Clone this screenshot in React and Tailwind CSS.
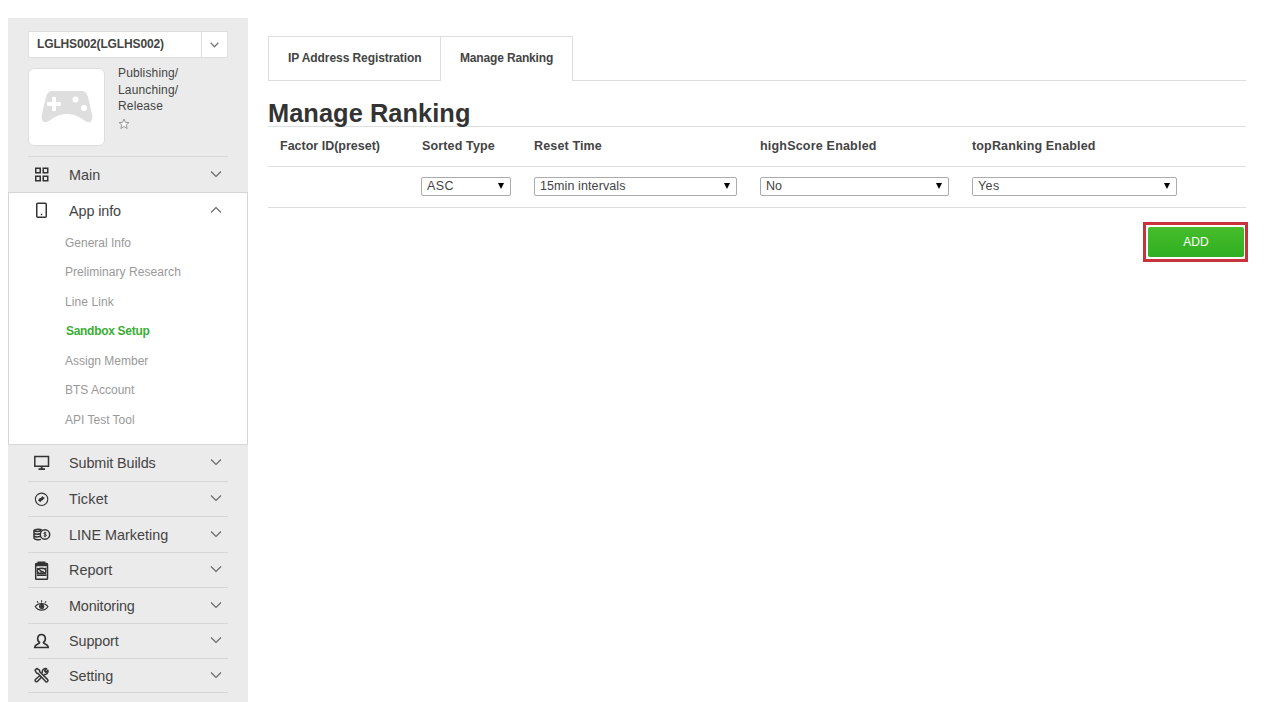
import React from "react";

const stroke = { fill: "none", stroke: "#333", strokeWidth: 1.5 };

const icons = {
  main: (
    <g {...stroke}>
      <rect x="2.75" y="2.25" width="4.5" height="4.5" />
      <rect x="10.25" y="2.25" width="4.5" height="4.5" />
      <rect x="2.75" y="10.25" width="4.5" height="4.5" />
      <rect x="10.25" y="10.25" width="4.5" height="4.5" />
    </g>
  ),
  app: (
    <g {...stroke}>
      <rect x="3.75" y="1.25" width="9.5" height="14" rx="1" />
      <path d="M7.8 12.5h1.4" />
    </g>
  ),
  monitor: (
    <g {...stroke}>
      <path d="M1.8 1.4h13.7v9.9H1.8z" />
      <path d="M8.7 11.5v2.5M5.5 14.2h6.5" strokeWidth="1.8" />
    </g>
  ),
  ticket: (
    <g {...stroke} strokeWidth="1.1">
      <circle cx="8.6" cy="8.3" r="6.2" />
      <path d="M4.9 9.4 6.8 7l1-.1L9.5 5l.8 1.200 1.600.5-2.300 2.600-.9.300-1.700 2-.800-1.700z" fill="#333" stroke="none" />
    </g>
  ),
  coins: (
    <g {...stroke} strokeWidth="1.5">
      <path d="M9 4C7.800 3 2 2.700 1 4.400v7.900c.7 1.700 5.300 1.700 7 1.100M1 7.100c1.200 1 4.300 1.200 6.200.6M1 9.800c1.200 1 4.300 1.200 6.200.6M1 4.400c1.500 1.200 5 1.200 7 .4" />
      <circle cx="12" cy="8.500" r="4.700" />
      <path d="M13.400 6.900c-.6-.6-2.600-.5-2.600.5 0 1.100 2.700.9 2.700 2 0 1-2.100 1.100-2.800.4M12 5.800v5.500" strokeWidth="1" />
    </g>
  ),
  report: (
    <g {...stroke}>
      <rect x="2.7" y="1.5" width="11.8" height="15.8" rx=".8" />
      <path d="M2.5 1h12v3.300h-12zM4.500-.5h8v2.500h-8z" fill="#333" stroke="none" />
      <ellipse cx="8.6" cy="8.900" rx="4.300" ry="2.700" />
      <path d="M4 6.200l9 5.800M7 9.500c.5 1 3 .8 3.200-.6M4 12l2-1.500M11 7l2.500-1" strokeWidth="1.300" />
      <path d="M4 13.200h9.500" strokeWidth="1.600" />
    </g>
  ),
  eye: (
    <g {...stroke} strokeWidth="1.2">
      <path d="M2.300 9.500c3-4 9.600-4 12.600 0-2.600 4.800-10 4.800-12.600 0z" />
      <circle cx="8.600" cy="9.400" r="2" />
      <circle cx="8.600" cy="9.400" r="1" fill="#333" />
      <path d="M8.600 5.500V3.200M5.200 6 4.200 4M12 6l1-2" strokeWidth="1" />
    </g>
  ),
  user: (
    <g {...stroke} strokeWidth="1.6">
      <path d="M6.600 9.500C3.600 7.700 4 1.500 8.500 1.500s4.900 6.200 1.900 8c0 1.800 4.600 1.200 4.900 5H1.700c.3-3.800 4.900-3.200 4.900-5z" />
    </g>
  ),
  tools: (
    <g {...stroke} strokeWidth="1.5" strokeLinejoin="round">
      <path d="M2 3.200 3.700 1.500l2.800 1.700.2 1.500 8 7.900c1 1.300-.8 3-2 2L5 6.500 3.500 6z" />
      <path d="m7 8.500-4.600 4c-1 1.300.5 3 1.900 2l4.500-4.500M9.200 6c-.5-3 1.800-5 4.400-4.300l-2 2.200 1.300 1.400 2-2c.9 2.600-1.600 4.600-4.200 4.200" />
    </g>
  ),
};

function Icon({ name }) {
  return (
    <svg width="17" height="17" viewBox="0 0 17 17" className="shrink-0 overflow-visible">
      {icons[name]}
    </svg>
  );
}

function Chevron({ up }) {
  return (
    <svg width="12" height="8" viewBox="0 0 12 8" fill="none" stroke="#666" strokeWidth="1.1" className="mb-[2px] shrink-0">
      <path d={up ? "M1 6.5 6 1.5l5 5" : "M1 1.5 6 6.5l5-5"} />
    </svg>
  );
}

function NavItem({ icon, label, open, className, spacing = "" }) {
  return (
    <div className={`flex items-center pl-[5px] pr-[6px] ${className}`}>
      <Icon name={icon} />
      <span className={`ml-[19px] flex-1 text-[14.4px] leading-5 text-[#444] ${spacing}`}>{label}</span>
      <Chevron up={open} />
    </div>
  );
}

const lower = [
  ["monitor", "Submit Builds", "h-[37px]", "tracking-[-0.1px]"],
  ["ticket", "Ticket", "h-[35px]", "tracking-[0.2px]"],
  ["coins", "LINE Marketing", "h-[36px]", ""],
  ["report", "Report", "h-[35px]", ""],
  ["eye", "Monitoring", "h-[36px]", "tracking-[-0.15px]"],
  ["user", "Support", "h-[35px]", "tracking-[-0.1px]"],
  ["tools", "Setting", "h-[34px]", "tracking-[-0.1px]"],
];

const subItems = [
  ["General Info", ""],
  ["Preliminary Research", "tracking-[0.06px]"],
  ["Line Link", "tracking-[0.1px]"],
  ["Sandbox Setup", "font-bold text-[#3aae36] pl-px tracking-[-0.3px]"],
  ["Assign Member", ""],
  ["BTS Account", ""],
  ["API Test Tool", ""],
];

function Sidebar() {
  return (
    <aside className="flex h-[684px] w-[240px] shrink-0 flex-col bg-[#ebebeb]">
      <div className="mx-5 mt-[13px] flex h-[27px] shrink-0 border border-[#dedede] bg-white">
        <div className="flex-1 pl-2 text-[12px] font-bold leading-[25px] tracking-[-0.14px] text-[#444]">LGLHS002(LGLHS002)</div>
        <div className="flex w-[26px] items-center justify-center border-l border-[#dedede]">
          <svg width="9" height="6" viewBox="0 0 9 6" fill="none" stroke="#777" strokeWidth="1.3">
            <path d="m.7.8 3.8 4 3.8-4" />
          </svg>
        </div>
      </div>
      <div className="mx-5 flex h-[99px] shrink-0 border-b border-[#d8d8d8] pt-[10px]">
        <div className="flex h-[78px] w-[77px] items-center justify-center rounded-[6px] border border-[#dedede] bg-white">
          <svg width="52" height="34" viewBox="0 0 52 34">
            <path d="M12 1h28c4 0 6 2 7 6l4 17c1.5 8-3 10-7.5 6.5C37 26 32 24 26 24s-11 2-17.5 6.5C4 34-.5 32 1 24L5 7c1-4 3-6 7-6z" fill="#dedede" />
            <path d="M11 7h4v5h5v4h-5v5h-4v-5H6v-4h5z" fill="#fff" />
            <circle cx="34.5" cy="9.5" r="3" fill="#fff" />
            <circle cx="43" cy="18" r="3" fill="#fff" />
          </svg>
        </div>
        <div className="ml-[13px] -mt-[3px] text-[12px] leading-[16.7px] tracking-[0.15px] text-[#444]">
          <div>Publishing/</div>
          <div>Launching/</div>
          <div>Release</div>
          <svg width="12" height="12" viewBox="0 0 12 12" className="mt-[3px]" fill="#f8f8f8" stroke="#999" strokeWidth="1">
            <path d="m6 1 1.4 3.4 3.6.2-2.8 2.3 1 3.6L6 8.5l-3.2 2 1-3.600L1 4.600l3.600-.2z" />
          </svg>
        </div>
      </div>
      <NavItem icon="main" label="Main" className="mx-5 h-[35px] shrink-0" />
      <div className="h-[253px] shrink-0 border border-[#d6d6d6] bg-white">
        <NavItem icon="app" label="App info" open className="mx-[19px] h-[35px]" spacing="tracking-[-0.1px]" />
        <ul className="pl-[56px] pt-[0.5px] text-[12px] text-[#999]">
          {subItems.map(([t, c]) => (
            <li key={t} className={`h-[29.5px] leading-[29.5px] ${c}`}>{t}</li>
          ))}
        </ul>
      </div>
      {lower.map(([i, t, h, s]) => (
        <NavItem key={t} icon={i} label={t} spacing={s} className={`mx-5 shrink-0 border-b border-[#d6d6d6] ${h}`} />
      ))}
    </aside>
  );
}

function Select({ value, width, spacing = "" }) {
  return (
    <div className={`flex h-[19px] items-center justify-between rounded-[2px] border border-[#ababab] bg-white pl-[5px] pr-[6px] text-[12.5px] text-[#444] ${width}`}>
      <span className={`leading-[17px] ${spacing}`}>{value}</span>
      <svg width="6" height="6" viewBox="0 0 6 6" className="mb-px">
        <path d="M0 0h6L3 6z" fill="#000" />
      </svg>
    </div>
  );
}

const columns = "grid grid-cols-[153px_113px_226px_212px_1fr] items-center border-b border-[#dedede]";

export default function App() {
  return (
    <div className="flex h-[702px] w-[1268px] overflow-hidden bg-white pl-2 pt-[18px] font-['Liberation_Sans',Arial,sans-serif]">
      <Sidebar />
      <main className="ml-5 mt-[18px] w-[978px]">
        <div className="flex h-[45px] text-[12px] font-bold leading-[43px] text-[#444]">
          <div className="w-[172px] border border-r-0 border-[#dedede] pl-[19px] tracking-[-0.08px]">IP Address Registration</div>
          <div className="w-[133px] border border-b-0 border-[#dedede] pl-[19px] tracking-[-0.16px]">Manage Ranking</div>
          <div className="flex-1 border-b border-[#dedede]" />
        </div>
        <h1 className="h-[46px] border-b border-[#dedede] pt-[16px] text-[25.4px] font-bold leading-[32px] tracking-[0.05px] text-[#333]">Manage Ranking</h1>
        <div className={`${columns} h-[40px] pb-px text-[12.5px] font-bold tracking-[0.15px] text-[#444]`}>
          <span className="pl-3 tracking-[0px]">Factor ID(preset)</span>
          <span className="pl-px">Sorted Type</span>
          <span>Reset Time</span>
          <span className="tracking-[0.2px]">highScore Enabled</span>
          <span>topRanking Enabled</span>
        </div>
        <div className={`${columns} h-[41px] pb-px`}>
          <span />
          <Select value="ASC" width="w-[90px]" spacing="tracking-[0.4px]" />
          <Select value="15min intervals" width="w-[203px]" spacing="tracking-[0.1px]" />
          <Select value="No" width="w-[189px]" />
          <Select value="Yes" width="w-[205px]" spacing="tracking-[0.4px]" />
        </div>
        <div className="-mr-[2px] mt-[14px] flex justify-end">
          <div className="h-[40px] w-[105px] border-[3px] border-[#c8323a] bg-white p-[2px] pr-px">
            <button className="block h-full w-full rounded-[2px] bg-linear-to-b from-[#46bd2b] to-[#30ae22] text-[12px] text-white">ADD</button>
          </div>
        </div>
      </main>
    </div>
  );
}
